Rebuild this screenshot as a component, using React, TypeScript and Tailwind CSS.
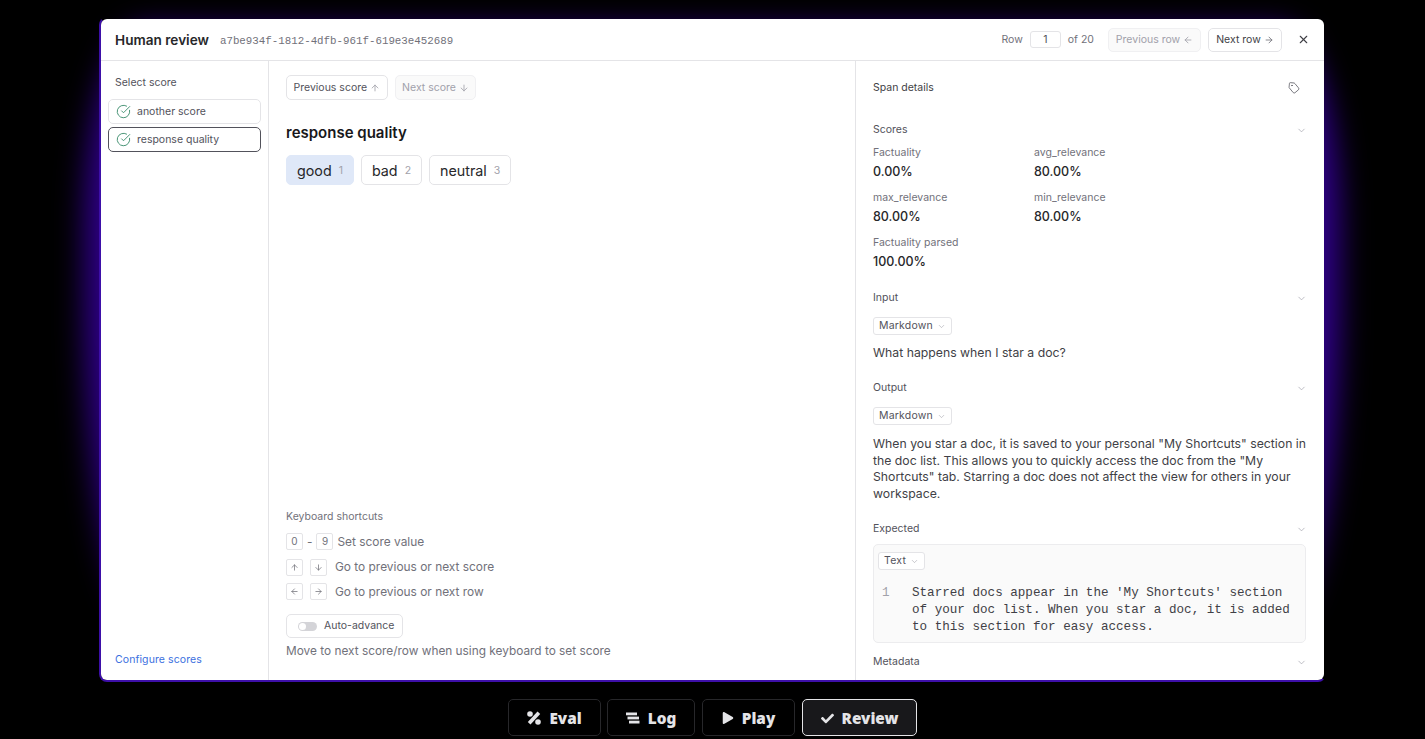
import React from "react"
import { ArrowDown, ArrowLeft, ArrowRight, ArrowUp, ChevronDown, CircleCheckBig, Tag, X } from "lucide-react"
import { FaCheck, FaPlay } from "react-icons/fa"

const Section = ({ title, className = "" }: { title: string; className?: string }) => (
  <div className={`flex h-[18px] items-center justify-between text-[10.5px] leading-[18px] text-[#52525b] ${className}`}>
    <span>{title}</span>
    <ChevronDown className="mr-[-1px] h-[11px] w-[11px] text-[#a1a1aa]" strokeWidth={1.5} />
  </div>
)

const Metric = ({ label, value }: { label: string; value: string }) => (
  <div className="h-[45px]">
    <div className="text-[10.5px] leading-[16px] text-[#71717a]">{label}</div>
    <div className="mt-[2px] text-[12.5px] leading-[18px] font-medium text-[#27272a]">{value}</div>
  </div>
)

const FormatButton = ({ label, className = "" }: { label: string; className?: string }) => (
  <div className={`flex h-[18px] w-fit items-center gap-[4px] rounded-[3px] border border-[#e4e4e7] bg-white px-[5px] text-[10.5px] tracking-[0.2px] text-[#52525b] ${className}`}>
    {label}
    <ChevronDown className="h-[9px] w-[9px] text-[#a1a1aa]" strokeWidth={1.5} />
  </div>
)

const Key = ({ children }: { children: React.ReactNode }) => (
  <div className="flex h-[17px] w-[17px] items-center justify-center rounded-[2px] border border-[#e4e4e7] text-[10px] text-[#71717a]">
    {children}
  </div>
)

const ScoreItem = ({ label, selected }: { label: string; selected?: boolean }) => (
  <div className={`flex h-[25px] items-center gap-[6px] rounded-[5px] border bg-white pl-[7px] text-[10.5px] text-[#52525b] ${selected ? "border-[#52525b]" : "border-[#e4e4e7]"}`}>
    <CircleCheckBig className="h-[15px] w-[15px] text-[#3f8f6f]" strokeWidth={1.5} />
    <span className="pt-[1px]">{label}</span>
  </div>
)

const Choice = ({ label, n, active }: { label: string; n: number; active?: boolean }) => (
  <div className={`flex h-[30px] items-center gap-[7px] rounded-[5px] border px-[10px] pt-[1px] text-[14.3px] text-[#27272a] ${active ? "border-[#dfe8f8] bg-[#dfe8f8]" : "border-[#e4e4e7] bg-white"}`}>
    {label}
    <span className="text-[10.5px] text-[#a1a1aa]">{n}</span>
  </div>
)

const DockButton = ({ icon, label, active, className = "" }: { icon: React.ReactNode; label: string; active?: boolean; className?: string }) => (
  <div className={`flex h-[37px] items-center justify-center gap-[8px] rounded-[5px] border pt-[1px] text-[15.3px] font-black text-[#e4e4e7] ${active ? "border-[#e4e4e7] bg-[#18181b]" : "border-[#27272a] bg-black"} ${className}`}>
    {icon}
    {label}
  </div>
)

const EvalIcon = () => (
  <svg width="14" height="14" viewBox="0 0 14 14" fill="currentColor">
    <circle cx="3" cy="3" r="2.8" />
    <circle cx="11" cy="11" r="2.8" />
    <path d="M10.5 0.6 L13.2 3 L3.5 13.4 L0.8 11 Z" />
  </svg>
)

const LogIcon = () => (
  <svg width="14" height="12" viewBox="0 0 14 12" fill="currentColor">
    <rect x="0" y="0.5" width="11" height="2.8" />
    <rect x="1.5" y="4.6" width="11.5" height="2.8" />
    <rect x="3" y="8.7" width="10.5" height="2.8" />
  </svg>
)

export default function App() {
  return (
    <div className="relative h-[739px] w-full overflow-hidden bg-black font-['Inter',sans-serif] antialiased">
      {/* purple glow behind the dialog */}
      <div className="absolute top-[28px] left-[85px] h-[592px] w-[1255px] rounded-[60px/200px_200px_330px_330px] bg-[#30008c] blur-[15px]" />

      <div className="relative mx-[99px] mt-[17px] flex flex-col">
        <div className="h-[665px] rounded-[8px] border-2 border-[#3d0fa8] border-t-transparent border-r-transparent">
          <div className="flex h-[661px] flex-col overflow-hidden rounded-[6px] bg-white">
            <header className="flex h-[42px] shrink-0 items-center border-b border-[#e4e4e7] px-[14px]">
              <span className="mt-[1px] text-[13.6px] font-semibold text-[#27272a]">Human review</span>
              <span className="mt-[3px] ml-[11px] font-['Liberation_Mono',monospace] text-[10.8px] text-[#71717a]">a7be934f-1812-4dfb-961f-619e3e452689</span>
              <div className="ml-auto flex items-center text-[10.5px] text-[#71717a]">
                <span className="pt-[1px]">Row</span>
                <div className="mx-[7px] flex h-[17px] w-[31px] items-center justify-center rounded-[3px] border border-[#e4e4e7] pt-[1px] text-[#52525b]">1</div>
                <span className="pt-[1px]">of 20</span>
                <div className="mr-[7px] ml-[14px] flex h-[24px] w-[93px] items-center justify-center gap-[3px] rounded-[5px] border border-[#f0f0f2] bg-[#fafafa] pt-[1px] text-[#a1a1aa]">
                  Previous row <ArrowLeft className="h-[10px] w-[10px]" />
                </div>
                <div className="flex h-[24px] w-[74px] items-center justify-center gap-[3px] rounded-[5px] border border-[#e4e4e7] pt-[1px] text-[#3f3f46]">
                  Next row <ArrowRight className="h-[10px] w-[10px] text-[#71717a]" />
                </div>
                <X className="ml-[15px] h-[13px] w-[13px] text-[#3f3f46]" />
              </div>
            </header>

            <div className="flex min-h-0 flex-1">
              <aside className="flex w-[168px] shrink-0 flex-col border-r border-[#e4e4e7] px-[7px] pt-[14px] pb-[12px]">
                <div className="px-[7px] text-[10.5px] leading-[16px] text-[#52525b]">Select score</div>
                <div className="mt-[8px] flex flex-col gap-[3px]">
                  <ScoreItem label="another score" />
                  <ScoreItem label="response quality" selected />
                </div>
                <div className="mt-auto px-[7px] text-[10.5px] leading-[16px] tracking-[0.1px] text-[#3b6fe0]">Configure scores</div>
              </aside>

              <main className="flex w-[587px] shrink-0 flex-col border-r border-[#e4e4e7] px-[17px] pt-[14px] pb-[19px]">
                <div className="flex gap-[7px]">
                  <div className="flex h-[25px] items-center gap-[3px] rounded-[5px] border border-[#e4e4e7] px-[6.5px] text-[10.5px] text-[#52525b]">
                    Previous score <ArrowUp className="h-[10px] w-[10px] text-[#a1a1aa]" />
                  </div>
                  <div className="flex h-[25px] items-center gap-[3px] rounded-[5px] border border-[#f0f0f2] bg-[#fafafa] px-[6.5px] text-[10.5px] text-[#a1a1aa]">
                    Next score <ArrowDown className="h-[10px] w-[10px]" />
                  </div>
                </div>
                <div className="mt-[21px] text-[15px] leading-[24px] font-semibold text-[#18181b]">response quality</div>
                <div className="mt-[10px] flex gap-[7px]">
                  <Choice label="good" n={1} active />
                  <Choice label="bad" n={2} />
                  <Choice label="neutral" n={3} />
                </div>

                <div className="mt-auto text-[10.5px] leading-[16px] text-[#71717a]">Keyboard shortcuts</div>
                <div className="mt-[8px] flex h-[17px] items-center gap-[4px] text-[11.9px] text-[#71717a]">
                  <Key>0</Key>
                  <span>-</span>
                  <Key>9</Key>
                  <span>Set score value</span>
                </div>
                <div className="mt-[8.5px] flex h-[17px] items-center text-[11.9px] text-[#71717a]">
                  <Key><ArrowUp className="h-[9px] w-[9px]" /></Key>
                  <span className="ml-[7px]"><Key><ArrowDown className="h-[9px] w-[9px]" /></Key></span>
                  <span className="ml-[8px]">Go to previous or next score</span>
                </div>
                <div className="mt-[7.5px] flex h-[17px] items-center text-[11.9px] text-[#71717a]">
                  <Key><ArrowLeft className="h-[9px] w-[9px]" /></Key>
                  <span className="ml-[7px]"><Key><ArrowRight className="h-[9px] w-[9px]" /></Key></span>
                  <span className="ml-[8px]">Go to previous or next row</span>
                </div>
                <div className="mt-[14px] flex h-[24px] w-[117px] items-center gap-[7px] rounded-[5px] border border-[#e4e4e7] pl-[11px] text-[10.5px] text-[#52525b]">
                  <div className="h-[9px] w-[19px] rounded-full bg-[#d4d4d8] p-[1px]">
                    <div className="h-[7px] w-[7px] rounded-full bg-white" />
                  </div>
                  Auto-advance
                </div>
                <div className="mt-[3px] text-[11.85px] leading-[20px] text-[#71717a]">Move to next score/row when using keyboard to set score</div>
              </main>

              <section className="min-w-0 flex-1 overflow-hidden pt-[18px] pr-[18px] pl-[17px]">
                <div className="flex h-[18px] items-center justify-between pr-[6px] text-[10.5px] text-[#3f3f46]">
                  <span>Span details</span>
                  <Tag className="mt-[-1px] h-[12px] w-[12px] rotate-[5deg] text-[#52525b]" strokeWidth={1.5} />
                </div>
                <Section title="Scores" className="mt-[24px]" />
                <div className="mt-[6px] grid grid-cols-[161px_1fr]">
                  <Metric label="Factuality" value="0.00%" />
                  <Metric label="avg_relevance" value="80.00%" />
                  <Metric label="max_relevance" value="80.00%" />
                  <Metric label="min_relevance" value="80.00%" />
                  <Metric label="Factuality parsed" value="100.00%" />
                </div>
                <Section title="Input" className="mt-[9px]" />
                <FormatButton label="Markdown" className="mt-[10px]" />
                <p className="mt-[9px] text-[12.25px] leading-[18px] text-[#3f3f46]">What happens when I star a doc?</p>
                <Section title="Output" className="mt-[17px]" />
                <FormatButton label="Markdown" className="mt-[10px]" />
                <p className="mt-[11px] mr-[-3px] text-[12.25px] leading-[16.5px] text-[#3f3f46]">
                  When you star a doc, it is saved to your personal "My Shortcuts" section in the doc list. This allows you to quickly access the doc from the "My Shortcuts" tab. Starring a doc does not affect the view for others in your workspace.
                </p>
                <Section title="Expected" className="mt-[18px]" />
                <div className="mt-[6px] h-[99px] rounded-[5px] border border-[#ececee] bg-[#fafafa] px-[4px] pt-[7px]">
                  <FormatButton label="Text" />
                  <div className="mt-[15px] flex font-['Liberation_Mono',monospace] text-[12.6px] leading-[17px] text-[#3f3f46]">
                    <span className="w-[34px] shrink-0 pl-[4px] text-[#a1a1aa]">1</span>
                    <span className="w-[385px]">Starred docs appear in the 'My Shortcuts' section of your doc list. When you star a doc, it is added to this section for easy access.</span>
                  </div>
                </div>
                <Section title="Metadata" className="mt-[10px]" />
              </section>
            </div>
          </div>
        </div>
      </div>

      <nav className="relative mt-[17px] flex justify-center gap-[7px] font-['Noto_Sans',sans-serif]">
        <DockButton icon={<EvalIcon />} label="Eval" className="w-[93px]" />
        <DockButton icon={<LogIcon />} label="Log" className="ml-[-1px] w-[88px]" />
        <DockButton icon={<FaPlay className="h-[12px] w-[12px]" />} label="Play" className="w-[93px]" />
        <DockButton icon={<FaCheck className="h-[13px] w-[13px]" />} label="Review" active className="w-[115px]" />
      </nav>
    </div>
  )
}
